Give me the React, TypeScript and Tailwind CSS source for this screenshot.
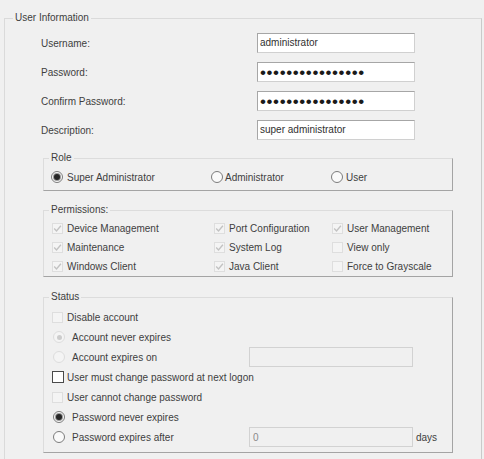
import React from "react";

type CheckProps = { checked?: boolean; kind?: "disabled" | "strong" };

function Check({ checked, kind = "disabled" }: CheckProps) {
  if (kind === "strong") {
    return (
      <span className="flex h-[12px] w-[12px] shrink-0 items-center justify-center border border-[#4a4a4a] bg-white" />
    );
  }
  return (
    <span className="flex h-[11px] w-[11px] shrink-0 items-center justify-center border border-[#dedede] bg-[#f4f4f4]">
      {checked && (
        <svg width="9" height="9" viewBox="0 0 9 9">
          <path d="M1.2 4.6 L3.5 6.9 L7.9 1.8" fill="none" stroke="#c2c2c2" strokeWidth="1.4" />
        </svg>
      )}
    </span>
  );
}

type RadioProps = { checked?: boolean; disabled?: boolean };

function Radio({ checked, disabled }: RadioProps) {
  return (
    <span
      className={
        disabled
          ? "flex h-[12px] w-[12px] shrink-0 items-center justify-center rounded-full border border-[#dddddd] bg-[#f4f4f4]"
          : "flex h-[12px] w-[12px] shrink-0 items-center justify-center rounded-full border border-[#7c7c7c] bg-[#fafafa]"
      }
    >
      {checked && (
        <span
          className={
            disabled
              ? "h-[5px] w-[5px] rounded-full bg-[#cccccc]"
              : "h-[6px] w-[6px] rounded-full bg-[#262626] shadow-[0_0_0_1px_#9a9a9a]"
          }
        />
      )}
    </span>
  );
}

function TextBox({ value, password }: { value: string; password?: boolean }) {
  return (
    <div className="flex h-[20px] w-[158px] items-center overflow-hidden border border-[#a6a6a6] border-b-[#d0d0d0] border-r-[#d0d0d0] bg-white pl-[2px] text-[#303030]">
      {password ? (
        <span className="text-[17px] leading-none tracking-[0.6px] text-[#1a1a1a]">{value}</span>
      ) : (
        <span className="leading-none">{value}</span>
      )}
    </div>
  );
}

function DisabledBox({ value }: { value?: string }) {
  return (
    <div className="flex h-[20px] w-[164px] items-center border border-[#d2d2d2] bg-[#f0f0f0] pl-[3px] text-[#8a8a8a]">
      {value}
    </div>
  );
}

const groupCls =
  "w-[410px] border border-t-[#dcdcdc] border-l-[#dcdcdc] border-r-[#a4a4a4] border-b-[#a4a4a4]";

const dots = "\u2022".repeat(16);

export default function App() {
  return (
    <div className="h-[459px] w-[484px] bg-[#f0f0f0] pl-[4px] pr-[2px] pt-[11px] font-['Liberation_Sans',Arial,sans-serif] text-[10px] text-[#3e3e3e]">
      <fieldset className="border border-t-[#dadada] border-l-[#dadada] border-r-[#cacaca] border-b-[#b4b4b4] pb-[5px]">
        <legend className="ml-[8px] px-[2px] leading-[14px]">User Information</legend>

        <div className="mt-[8px] grid grid-cols-[216px_158px] gap-y-[9px] pl-[36px]">
          <div className="flex h-[20px] items-center">Username:</div>
          <TextBox value="administrator" />
          <div className="flex h-[20px] items-center">Password:</div>
          <TextBox value={dots} password />
          <div className="flex h-[20px] items-center">Confirm Password:</div>
          <TextBox value={dots} password />
          <div className="flex h-[20px] items-center">Description:</div>
          <TextBox value="super administrator" />
        </div>

        <fieldset className={`ml-[38px] mt-[11px] pb-[5px] pt-[4px] ${groupCls}`}>
          <legend className="ml-[5px] px-[2px] leading-[14px]">Role</legend>
          <div className="grid h-[16px] grid-cols-[160px_120px_1fr] items-center pl-[7px]">
            <div className="flex items-center gap-[4px]">
              <Radio checked />
              <span>Super Administrator</span>
            </div>
            <div className="flex items-center gap-[2px]">
              <Radio />
              <span>Administrator</span>
            </div>
            <div className="flex items-center gap-[3px]">
              <Radio />
              <span>User</span>
            </div>
          </div>
        </fieldset>

        <fieldset className={`ml-[38px] mt-[12px] pt-[2px] ${groupCls}`}>
          <legend className="ml-[5px] px-[2px] leading-[14px]">Permissions:</legend>
          <div className="grid grid-cols-[162px_118px_1fr] pl-[8px]">
            {[
              ["Device Management", true],
              ["Port Configuration", true],
              ["User Management", true],
              ["Maintenance", true],
              ["System Log", true],
              ["View only", false],
              ["Windows Client", true],
              ["Java Client", true],
              ["Force to Grayscale", false],
            ].map(([label, checked]) => (
              <div key={label as string} className="flex h-[19px] items-center gap-[4px]">
                <Check checked={checked as boolean} />
                <span>{label as string}</span>
              </div>
            ))}
          </div>
        </fieldset>

        <fieldset className={`ml-[38px] mt-[13px] pb-[5px] pt-[3px] ${groupCls}`}>
          <legend className="ml-[5px] px-[2px] leading-[14px]">Status</legend>
          <div className="flex flex-col">
            <div className="flex h-[20px] items-center gap-[4px] pl-[8px]">
              <Check />
              <span>Disable account</span>
            </div>
            <div className="flex h-[20px] items-center gap-[7px] pl-[9px]">
              <Radio checked disabled />
              <span>Account never expires</span>
            </div>
            <div className="grid h-[20px] grid-cols-[205px_164px] items-center">
              <div className="flex items-center gap-[7px] pl-[9px]">
                <Radio disabled />
                <span>Account expires on</span>
              </div>
              <DisabledBox />
            </div>
            <div className="flex h-[20px] items-center gap-[3px] pl-[8px]">
              <Check kind="strong" />
              <span>User must change password at next logon</span>
            </div>
            <div className="flex h-[20px] items-center gap-[4px] pl-[8px]">
              <Check />
              <span>User cannot change password</span>
            </div>
            <div className="flex h-[20px] items-center gap-[7px] pl-[9px]">
              <Radio checked />
              <span>Password never expires</span>
            </div>
            <div className="grid h-[20px] grid-cols-[205px_164px_auto] items-center">
              <div className="flex items-center gap-[7px] pl-[9px]">
                <Radio />
                <span>Password expires after</span>
              </div>
              <DisabledBox value="0" />
              <span className="pl-[3px]">days</span>
            </div>
          </div>
        </fieldset>
        <div className="h-[2px]" />
      </fieldset>
    </div>
  );
}
